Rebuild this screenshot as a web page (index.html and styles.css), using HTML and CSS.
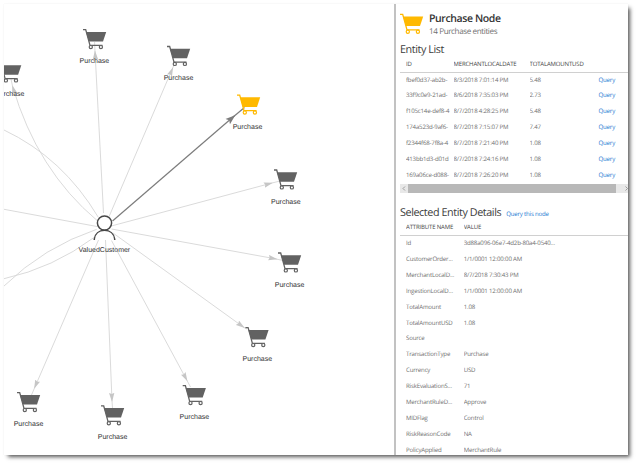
FILE: index.html
```html
<!DOCTYPE html>
<html lang="en">
<head>
<meta charset="utf-8">
<title>Purchase Node</title>
<link rel="stylesheet" href="styles.css">
</head>
<body>
<main class="window">
  <section class="graph">
    <svg class="canvas" viewBox="4 4 390 451" width="390" height="451">
      <defs>
        <g id="cart">
          <path d="M3 3H23.2L20 12.6H6z" fill="currentColor"/>
          <path d="M0 .8H2.7L7 16.4H19.5" fill="none" stroke="currentColor" stroke-width="1.3"/>
          <circle cx="7.8" cy="18.2" r="1.6" class="wheel"/>
          <circle cx="17.9" cy="18.2" r="1.6" class="wheel"/>
        </g>
        <marker id="arrow" viewBox="0 0 10 6" refX="9" refY="3" markerWidth="9" markerHeight="6" markerUnits="userSpaceOnUse" orient="auto"><path d="M0 0L10 3L0 6L1.3 3z" fill="#c6c6c6"/></marker>
        <marker id="arrow-on" viewBox="0 0 10 7" refX="9" refY="3.5" markerWidth="10" markerHeight="8" markerUnits="userSpaceOnUse" orient="auto"><path d="M0 0L10 3.5L0 7L2 3.5z" fill="#7c7c7c"/></marker>
      </defs>
      <g class="edge">
        <path d="M103.5 213L95 51.5"/><path d="M95 52L94.6 42"/>
        <path d="M109 216.7L172.7 68"/><path d="M172.7 68L174.7 63.5"/>
        <path d="M112 225.8L272 183"/><path d="M272 183L280 181"/>
        <path d="M111.5 229L276.5 259"/><path d="M276 259L283 260.5"/>
        <path d="M113 233L244 327.5"/><path d="M244 327.5L247 329"/>
        <path d="M111.5 240.5L187 380.5"/><path d="M187 380.5L190.5 387"/>
        <path d="M105.5 240L112 401"/><path d="M112 401L112.5 408"/>
        <path d="M98.5 240L34.5 388"/><path d="M34.5 388L31.5 395"/>
        <path d="M97.3 220.7Q37 170 12.5 86"/><path d="M12.5 86L11 79"/>
      </g>
      <g class="edge plain">
        <path d="M97 226.5L4 209.3"/>
        <path d="M98.3 217.3Q63 158 4 130"/>
        <path d="M96.7 229.3Q44 247 4 286"/>
        <path d="M94.3 237.3Q53 268 4 278.7"/>
      </g>
      <path class="edge-on" d="M112.5 221L234.5 115.8"/>
      <path class="edge-on plain" d="M234 116.2L244.5 107.5"/>
      <g class="node">
        <use href="#cart" x="83" y="28.9"/><text x="94.4" y="62.5">Purchase</text>
        <use href="#cart" x="167" y="45.7"/><text x="178.5" y="79.5">Purchase</text>
        <use href="#cart" x="-1.9" y="62.2"/><text x="9.7" y="96.3">Purchase</text>
        <use href="#cart" x="274" y="169.2"/><text x="285.8" y="203.6">Purchase</text>
        <use href="#cart" x="278" y="252.2"/><text x="289.6" y="286.5">Purchase</text>
        <use href="#cart" x="245.4" y="326.9"/><text x="257.3" y="361">Purchase</text>
        <use href="#cart" x="182.7" y="384.9"/><text x="194.4" y="418.8">Purchase</text>
        <use href="#cart" x="101" y="405"/><text x="112.6" y="439.2">Purchase</text>
        <use href="#cart" x="17" y="391.9"/><text x="28.5" y="425.8">Purchase</text>
        <use class="gold" href="#cart" x="237" y="94.3"/><text x="247.5" y="128.6">Purchase</text>
        <path class="person" d="M94.3 240V239C95 233.8 99 230.3 104.5 230.3S114 233.8 114.7 239V240"/>
        <circle class="person" cx="104.5" cy="223" r="7.1"/>
        <text x="104.4" y="252">ValuedCustomer</text>
      </g>
    </svg>
  </section>
  <aside class="panel">
    <header class="head">
      <svg class="gold" width="24" height="22" viewBox="0 0 24 21"><use href="#cart"/></svg>
      <div><h1>Purchase Node</h1><p>14 Purchase entities</p></div>
    </header>
    <h2>Entity List</h2>
    <div class="list">
      <div class="row th"><span>ID</span><span>MERCHANTLOCALDATE</span><span>TOTALAMOUNTUSD</span></div>
      <div class="row"><span>fbef0d37-ab2b-</span><span>8/3/2018 7:01:14 PM</span><span>5.48</span><a>Query</a></div>
      <div class="row"><span>33f9c0e9-21ad-</span><span>8/6/2018 7:35:03 PM</span><span>2.73</span><a>Query</a></div>
      <div class="row"><span>f105c14e-def8-4</span><span>8/7/2018 4:28:25 PM</span><span>5.48</span><a>Query</a></div>
      <div class="row"><span>174a523d-9af6-</span><span>8/7/2018 7:15:07 PM</span><span>7.47</span><a>Query</a></div>
      <div class="row"><span>f2344f68-7f8a-4</span><span>8/7/2018 7:21:40 PM</span><span>1.08</span><a>Query</a></div>
      <div class="row"><span>413bb1d3-d01d</span><span>8/7/2018 7:24:16 PM</span><span>1.08</span><a>Query</a></div>
      <div class="row"><span>169a06ce-d088-</span><span>8/7/2018 7:26:20 PM</span><span>1.08</span><a>Query</a></div>
    </div>
    <div class="scroll">
      <svg width="8" height="9" viewBox="0 0 8 9"><path d="M5 2.5L3 4.500L5 6.5"/></svg>
      <div class="thumb"></div>
      <svg width="12" height="9" viewBox="0 0 12 9"><path d="M9.5 2.500L11.5 4.500L9.5 6.5"/></svg>
    </div>
    <div class="sub"><h2>Selected Entity Details</h2><a>Query this node</a></div>
    <div class="details">
      <div class="row th"><span>ATTRIBUTE NAME</span><span>VALUE</span></div>
      <div class="row"><span>Id</span><span>3d88a096-06e7-4d2b-80a4-0540...</span></div>
      <div class="row"><span>CustomerOrder...</span><span>1/1/0001 12:00:00 AM</span></div>
      <div class="row"><span>MerchantLocalD...</span><span>8/7/2018 7:30:43 PM</span></div>
      <div class="row"><span>IngestionLocalD...</span><span>1/1/0001 12:00:00 AM</span></div>
      <div class="row"><span>TotalAmount</span><span>1.08</span></div>
      <div class="row"><span>TotalAmountUSD</span><span>1.08</span></div>
      <div class="row"><span>Source</span><span></span></div>
      <div class="row"><span>TransactionType</span><span>Purchase</span></div>
      <div class="row"><span>Currency</span><span>USD</span></div>
      <div class="row"><span>RiskEvaluationS...</span><span>71</span></div>
      <div class="row"><span>MerchantRuleD...</span><span>Approve</span></div>
      <div class="row"><span>MIDFlag</span><span>Control</span></div>
      <div class="row"><span>RiskReasonCode</span><span>NA</span></div>
      <div class="row"><span>PolicyApplied</span><span>MerchantRule</span></div>
    </div>
  </aside>
</main>
</body>
</html>
```
FILE: styles.css
```css
* { box-sizing: border-box; }
body {
  margin: 0;
  padding: 4px 10px 9px 4px;
  height: 464px;
  overflow: hidden;
  background: #fff;
  font-family: "Open Sans", "Noto Sans", sans-serif;
  text-rendering: geometricPrecision;
}
.window {
  display: flex;
  width: 624px;
  height: 451px;
  background: #fff;
  box-shadow: 3px 3px 4px -1px rgba(0, 0, 0, .65), 0 0 1px rgba(0, 0, 0, .1);
}
.graph { width: 390px; flex: none; overflow: hidden; }
.canvas { display: block; }
.wheel { fill: #fff; stroke: currentColor; stroke-width: 1.2; }
.edge { fill: none; stroke: #d6d6d6; stroke-width: .9; }
.edge path:nth-child(odd) { marker-end: url(#arrow); }
.edge.plain path { marker-end: none; }
.edge-on { stroke: #7c7c7c; stroke-width: 1.2; marker-end: url(#arrow-on); }
.edge-on.plain { marker-end: none; }
.node { color: #626262; }
.node text {
  font: 7px "Liberation Sans", Arial, sans-serif;
  text-anchor: middle;
  fill: #333;
}
.person { fill: #fff; stroke: #484848; stroke-width: 1.5; }
path.person { fill: none; }
.gold { color: #ffb900; }
.panel {
  flex: 1;
  min-width: 0;
  padding: 8px 0 0 4px;
  border-left: 2px solid #c2c2c2;
  overflow: hidden;
  color: #707070;
}
.head { display: flex; gap: 5px; height: 30px; }
.head svg { margin-top: 1px; }
h1, h2, p { margin: 0; white-space: nowrap; }
h1 { font-size: 10.5px; line-height: 15px; font-weight: 600; color: #333; letter-spacing: -.4px; }
p { font-size: 8.1px; line-height: 10px; letter-spacing: -.4px; }
h2 { font-size: 10.8px; line-height: 15px; font-weight: 400; color: #3c3c3c; letter-spacing: -.42px; }
.row {
  display: grid;
  height: 15.93px;
  line-height: 14.6px;
  padding-left: 6px;
  font-size: 6.1px;
  letter-spacing: -.18px;
  white-space: nowrap;
}
.row span { overflow: hidden; }
.list .row { grid-template-columns: 47.5px 76px 69px 30px; }
.list .row span:first-child { width: 44px; }
.details .row { grid-template-columns: 57.7px 1fr; }
.row.th { border-bottom: 1px solid #d0d0d0; color: #444; font-size: 6px; letter-spacing: -.15px; }
.list .th { height: 15.5px; line-height: 15px; }
.details .th { height: 16px; line-height: 15px; }
a { color: #1a78d2; }
.scroll { display: flex; height: 9px; background: #e8e8e8; }
.scroll svg { flex: none; fill: none; stroke: #888; stroke-width: .8; }
.thumb { flex: 1; background: #b8b8b8; }
.sub { display: flex; align-items: center; gap: 5px; margin-top: 12px; }
.sub a { font-size: 6.1px; letter-spacing: -.2px; padding-top: 3px; white-space: nowrap; }
```
